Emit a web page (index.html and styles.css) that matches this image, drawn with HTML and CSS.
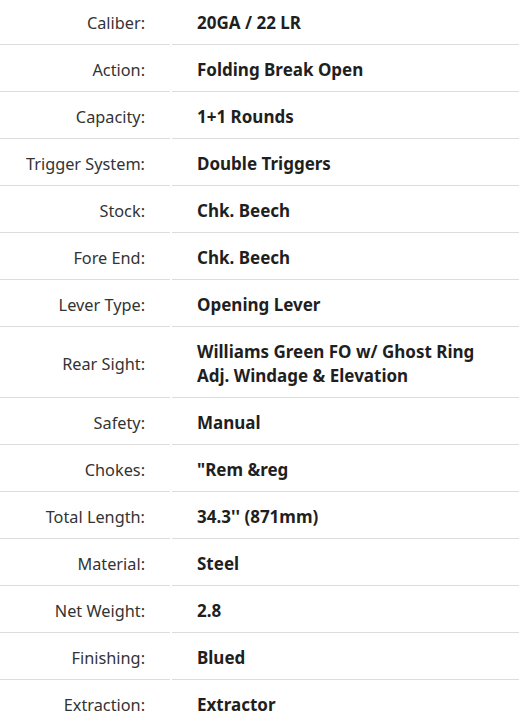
FILE: index.html
```html
<!DOCTYPE html>
<html>
<head>
<meta charset="utf-8">
<link rel="stylesheet" href="styles.css">
</head>
<body>
<div class="specs">
  <div class="row"><div class="label">Caliber:</div><div class="value">20GA / 22 LR</div></div>
  <div class="row"><div class="label">Action:</div><div class="value">Folding Break Open</div></div>
  <div class="row"><div class="label">Capacity:</div><div class="value">1+1 Rounds</div></div>
  <div class="row"><div class="label">Trigger System:</div><div class="value">Double Triggers</div></div>
  <div class="row"><div class="label">Stock:</div><div class="value">Chk. Beech</div></div>
  <div class="row"><div class="label">Fore End:</div><div class="value">Chk. Beech</div></div>
  <div class="row"><div class="label">Lever Type:</div><div class="value">Opening Lever</div></div>
  <div class="row"><div class="label">Rear Sight:</div><div class="value">Williams Green FO w/ Ghost Ring<br>Adj. Windage &amp; Elevation</div></div>
  <div class="row"><div class="label">Safety:</div><div class="value">Manual</div></div>
  <div class="row"><div class="label">Chokes:</div><div class="value">"Rem &amp;reg</div></div>
  <div class="row"><div class="label">Total Length:</div><div class="value">34.3'' (871mm)</div></div>
  <div class="row"><div class="label">Material:</div><div class="value">Steel</div></div>
  <div class="row"><div class="label">Net Weight:</div><div class="value">2.8</div></div>
  <div class="row"><div class="label">Finishing:</div><div class="value">Blued</div></div>
  <div class="row"><div class="label">Extraction:</div><div class="value">Extractor</div></div>
</div>
</body>
</html>
```
FILE: styles.css
```css
html, body {
  margin: 0;
  padding: 0;
  background: #fff;
}
body {
  font-family: "Noto Sans", "Open Sans", "DejaVu Sans", sans-serif;
  font-size: 16px;
  line-height: 24px;
  color: #333;
  overflow: hidden;
}
.specs {
  margin-top: -2px;
  display: flex;
  flex-direction: column;
}
.row {
  display: flex;
  gap: 2px;
}
.label, .value {
  border-bottom: 1px solid #dcdcdc;
  padding: 13px 0 9px;
  display: flex;
  align-items: center;
}
.label {
  width: 170px;
  flex: none;
  justify-content: flex-end;
  padding-right: 25px;
  box-sizing: border-box;
  font-size: 16.3px;
  color: #333;
}
.value {
  flex: 1;
  padding-left: 25px;
  font-size: 17px;
  font-weight: 700;
  color: #1f1f1f;
}
```
